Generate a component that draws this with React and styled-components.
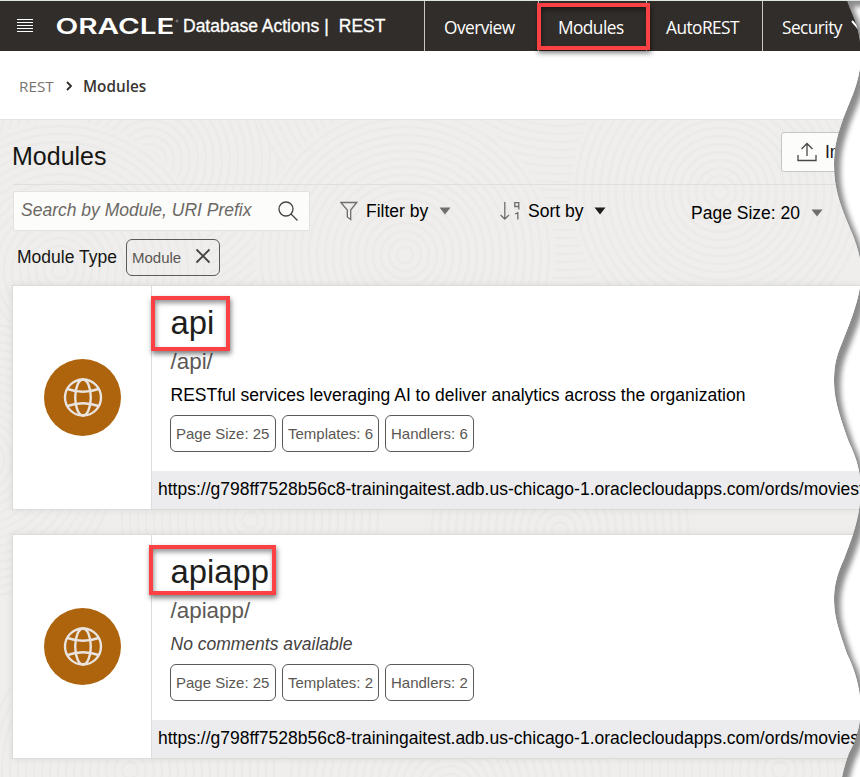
import React from "react";
import styled, { createGlobalStyle } from "styled-components";

const GlobalStyle = createGlobalStyle`
  * { box-sizing: border-box; }
  body { margin: 0; font-family: "Liberation Sans", Arial, sans-serif; color: #161513; }
`;

const Page = styled.div`
  position: relative;
  width: 860px;
  height: 777px;
  overflow: hidden;
  background: #fff;
  display: flex;
  flex-direction: column;
`;

const Header = styled.header`
  display: flex;
  flex: none;
  height: 51px;
  border-top: 1px solid #dde5dc;
  background: #312d2a;
  color: #fff;
`;

const Brand = styled.div`
  display: flex;
  align-items: center;
  flex: none;
  width: 424px;
  padding-left: 17px;
`;

const Logo = styled.svg`
  flex: none;
  margin-left: 22px;
`;

const Product = styled.div`
  display: flex;
  margin-left: 3px;
  font-size: 17.5px;
  line-height: 24px;
  -webkit-text-stroke: 0.3px #fff;
`;

const Bar = styled.span`
  margin: 0 10px 0 5px;
`;

const Nav = styled.nav`
  display: flex;
`;

const NavItem = styled.div`
  position: relative;
  flex: none;
  width: ${(p) => p.$width}px;
  padding: 2px 0 0 19px;
  border-left: 1px solid #c9c7c5;
  font-family: "Open Sans", "Noto Sans", sans-serif;
  font-size: 17.3px;
  letter-spacing: -0.55px;
  line-height: 49px;
  white-space: nowrap;
`;

const Highlight = styled.div`
  position: absolute;
  z-index: 1;
  left: ${(p) => p.$x}px;
  top: ${(p) => p.$y}px;
  width: ${(p) => p.$w}px;
  height: ${(p) => p.$h}px;
  border: 4px solid #fb4143;
  box-shadow: 1px 3px 5px rgba(0, 0, 0, 0.5), inset 1px 3px 5px rgba(0, 0, 0, 0.42);
`;

const NavChevron = styled.svg`
  position: absolute;
  left: 87px;
  top: 18px;
`;

const Crumbs = styled.div`
  display: flex;
  align-items: center;
  flex: none;
  height: 69px;
  padding: 1px 0 0 19px;
  border-bottom: 1px solid #e4e4e3;
  font-family: "Open Sans", "Noto Sans", sans-serif;
  font-size: 15.3px;
  line-height: 24px;
`;

const CrumbLink = styled.span`
  width: 46px;
  color: #77736f;
`;

const CrumbCurrent = styled.span`
  margin-left: 10px;
  font-weight: 600;
  color: #3a3632;
`;

const Main = styled.main`
  position: relative;
  flex: 1;
  background: #efeeec;
`;

const Texture = styled.svg`
  position: absolute;
  left: 0;
  top: 0;
`;

const Content = styled.div`
  position: relative;
  padding-left: 13px;
`;

const TitleRow = styled.div`
  display: flex;
  height: 65px;
  border-bottom: 1px solid #dde0dd;
`;

const Title = styled.h1`
  flex: none;
  margin: 21px 0 0 -1px;
  width: 769px;
  font-size: 25px;
  font-weight: 400;
  line-height: 30px;
`;

const ImportButton = styled.div`
  display: flex;
  align-items: center;
  flex: none;
  gap: 8px;
  width: 110px;
  height: 40px;
  margin-top: 12px;
  padding-left: 15px;
  background: #fcfcfb;
  border: 1px solid #c4c5c7;
  border-radius: 3px;
  font-size: 17.5px;
`;

const Tools = styled.div`
  display: flex;
  align-items: flex-start;
  height: 47px;
  padding-top: 6px;
  font-size: 17.5px;
`;

const SearchBox = styled.div`
  display: flex;
  align-items: center;
  justify-content: space-between;
  flex: none;
  width: 297px;
  height: 40px;
  padding: 0 11px 1px 7px;
  background: #fcfcfb;
  border: 1px solid #e2e2e1;
  border-radius: 2px;
  color: #6b6864;
  font-style: italic;
  white-space: nowrap;
`;

const Tool = styled.div`
  display: flex;
  align-items: center;
  height: 24px;
  margin: ${(p) => p.$top}px 0 0 ${(p) => p.$left}px;
  color: #000;
  white-space: nowrap;
  line-height: 24px;
`;

const ToolLabel = styled.span`
  width: ${(p) => p.$width}px;
`;

const FilterRow = styled.div`
  display: flex;
  align-items: center;
  height: 38px;
  margin-top: 6px;
  padding-left: 4px;
`;

const FilterLabel = styled.span`
  width: 109px;
  font-size: 17.5px;
`;

const Chip = styled.span`
  display: flex;
  align-items: center;
  flex: none;
  width: ${(p) => p.$width}px;
  height: 37px;
  padding-left: 5px;
  border: 1px solid #5d5a56;
  border-radius: 6px;
  color: #5a5753;
  font-size: 15px;
  white-space: nowrap;

  svg { margin: -3px 0 0 14px; }
`;

const Cards = styled.div`
  display: flex;
  flex-direction: column;
  gap: 24px;
  margin-top: 9px;
`;

const Card = styled.article`
  display: flex;
  height: 225px;
  background: #fff;
  border: 1px solid #dcdcdb;
  border-right: 0;
  box-shadow: 0 0 8px rgba(0, 0, 0, 0.07);
  margin-left: -1px;
`;

const CardIcon = styled.div`
  display: flex;
  align-items: center;
  justify-content: center;
  flex: none;
  width: 139px;
  border-right: 1px solid #dcdcdb;
`;

const CardBody = styled.div`
  position: relative;
  display: flex;
  flex-direction: column;
  flex: 1;
  min-width: 0;
  padding-top: 17px;
`;

const Name = styled.h2`
  margin: 0 0 5px 18.5px;
  font-size: 32.8px;
  font-weight: 400;
  line-height: 40px;
  color: #201e1c;
`;

const Prefix = styled.div`
  margin: 0 0 7px 18.5px;
  font-size: 22.4px;
  line-height: 28px;
  color: #5c5955;
`;

const Comment = styled.div`
  margin: 0 0 8px 18.5px;
  font-size: 17.5px;
  line-height: 24px;
  color: ${(p) => (p.$empty ? "#45423f" : "#000")};
  font-style: ${(p) => (p.$empty ? "italic" : "normal")};
`;

const Stats = styled.div`
  display: flex;
  gap: 6px;
  margin-left: 18px;
`;

const Url = styled.div`
  height: 38px;
  margin-top: auto;
  padding-left: 6px;
  overflow: hidden;
  background: #ececee;
  color: #000;
  font-size: 17.5px;
  line-height: 37px;
  white-space: nowrap;
`;

const TornEdge = styled.svg`
  position: absolute;
  z-index: 2;
  left: 820px;
  top: 0;
`;

const Caret = ({ color = "#706e6c" }) => (
  <svg width="12" height="8" viewBox="0 0 12 8">
    <path d="M.5 .5h11L6 7.5z" fill={color} />
  </svg>
);

const Globe = () => (
  <svg width="77" height="77" viewBox="0 0 77 77">
    <circle cx="38.5" cy="38.5" r="38.5" fill="#ae630d" />
    <g fill="none" stroke="#eae4e1" strokeWidth="2.4">
      <circle cx="39" cy="38.500" r="18" />
      <ellipse cx="39" cy="38.500" rx="7.8" ry="18" />
      <path d="M23.500 30Q39 35.500 54.500 30M23.500 47Q39 41.500 54.500 47" />
    </g>
  </svg>
);

const swirls = [
  [150, 40, 260], [560, -130, 330], [60, 150, 150], [405, 135, 150],
  [720, 72, 150], [250, 400, 130], [560, 410, 130], [-20, 340, 140],
  [130, 650, 150], [450, 670, 160], [780, 650, 160],
];

const Backdrop = () => (
  <Texture width="860" height="657">
    {swirls.map(([x, y, r]) => (
      <g key={`${x}-${y}`} fill="none" stroke="#ebeae8" strokeWidth="2.4">
        <circle cx={x} cy={y} r={r} fill="#efeeec" stroke="none" />
        {Array.from({ length: Math.floor(r / 8) }, (_, i) => (
          <circle key={i} cx={x} cy={y} r={8 * (i + 1)} />
        ))}
      </g>
    ))}
  </Texture>
);

const tear =
  "M27 1C31 14 37 20 40 43L40 68C37 88 29 103 23 119C18 134 14 145 14 165C14 188 20 203 26 219C32 233 37 244 40 259L40 287C37 306 29 325 22 343C16 357 14 366 14 382C14 402 22 422 28 440C33 451 38 462 40 477L40 502C38 522 32 538 24 559C17 574 14 586 14 600C14 620 22 638 27 654C33 666 38 680 40 697L40 720C38 733 34 744 29 753Q25 763 22 777L100 777L100 1Z";

const modules = [
  {
    name: "api",
    prefix: "/api/",
    comment: "RESTful services leveraging AI to deliver analytics across the organization",
    templates: 6,
    handlers: 6,
    box: { $x: -1, $y: 10, $w: 79, $h: 55 },
  },
  {
    name: "apiapp",
    prefix: "/apiapp/",
    templates: 2,
    handlers: 2,
    box: { $x: -3, $y: 10, $w: 127, $h: 50 },
  },
];

export default function App() {
  return (
    <Page>
      <GlobalStyle />
      <Header>
        <Brand>
          <svg width="16" height="16" viewBox="0 0 16 16">
            <path d="M0 1.500h16M0 4.500h16M0 7.500h16M0 10.500h16M0 13.500h16" stroke="#fff" strokeWidth="1.1" />
          </svg>
          <Logo width="125" height="24" viewBox="0 0 125 24">
            <text x="0.500" y="20" fill="#fff" fontFamily="Inter, Liberation Sans, sans-serif" fontWeight="600" fontSize="21.500" textLength="119" lengthAdjust="spacingAndGlyphs">ORACLE</text>
            <circle cx="122" cy="7" r="1" fill="none" stroke="#ccc" strokeWidth=".5" />
          </Logo>
          <Product>Database Actions<Bar>|</Bar>REST</Product>
        </Brand>
        <Nav>
          <NavItem $width={114}>Overview</NavItem>
          <NavItem $width={108}>
            Modules
            <Highlight $x={-2} $y={2} $w={113} $h={47} />
          </NavItem>
          <NavItem $width={116}>AutoREST</NavItem>
          <NavItem $width={120}>
            Security
            <NavChevron width="16" height="12" viewBox="0 0 16 12">
              <path d="M2 2l6 7 6-7" fill="none" stroke="#fff" strokeWidth="2" />
            </NavChevron>
          </NavItem>
        </Nav>
      </Header>
      <Crumbs>
        <CrumbLink>REST</CrumbLink>
        <svg width="8" height="10" viewBox="0 0 8 10">
          <path d="M2 1l4 4-4 4" fill="none" stroke="#312d2a" strokeWidth="1.8" />
        </svg>
        <CrumbCurrent>Modules</CrumbCurrent>
      </Crumbs>
      <Main>
        <Backdrop />
        <Content>
          <TitleRow>
            <Title>Modules</Title>
            <ImportButton>
              <svg width="20" height="20" viewBox="0 0 20 20" fill="none" stroke="#4a4744" strokeWidth="1.3">
                <path d="M1 13v5.500h18V13M10 14V1.500M4.500 7L10 1.500 15.500 7" />
              </svg>
              Import
            </ImportButton>
          </TitleRow>
          <Tools>
            <SearchBox>
              Search by Module, URI Prefix
              <svg width="20" height="20" viewBox="0 0 20 20" fill="none" stroke="#45423f" strokeWidth="1.3">
                <circle cx="8" cy="8" r="7" />
                <path d="M13 13l6.500 6.500" />
              </svg>
            </SearchBox>
            <Tool $left={30} $top={8}>
              <svg width="26" height="20" viewBox="0 0 26 20" fill="none" stroke="#706e6c" strokeWidth="1.3">
                <path d="M.8 1.500h16L10.700 9v9.500L7.300 16V9z" />
              </svg>
              <ToolLabel $width={73}>Filter by</ToolLabel>
              <Caret />
            </Tool>
            <Tool $left={49} $top={8}>
              <svg width="28" height="20" viewBox="0 0 28 20" fill="none" stroke="#706e6c" strokeWidth="1.3">
                <path d="M4.800 1v17M.6 14l4.200 4 4.200-4M18.800 8.500V1.700h-4v3.800h4M15 13l2.800-1.300V18.500" />
              </svg>
              <ToolLabel $width={66}>Sort by</ToolLabel>
              <Caret color="#201e1c" />
            </Tool>
            <Tool $left={85} $top={10}>
              <ToolLabel $width={120}>Page Size: 20</ToolLabel>
              <Caret />
            </Tool>
          </Tools>
          <FilterRow>
            <FilterLabel>Module Type</FilterLabel>
            <Chip $width={94}>
              Module
              <svg width="16" height="16" viewBox="0 0 16 16">
                <path d="M1.500 1.500l13 13M14.500 1.500l-13 13" stroke="#45423f" strokeWidth="1.8" />
              </svg>
            </Chip>
          </FilterRow>
          <Cards>
            {modules.map((m) => (
              <Card key={m.name}>
                <CardIcon><Globe /></CardIcon>
                <CardBody>
                  <Name>{m.name}</Name>
                  <Prefix>{m.prefix}</Prefix>
                  <Comment $empty={!m.comment}>{m.comment || "No comments available"}</Comment>
                  <Stats>
                    <Chip $width={106}>Page Size: 25</Chip>
                    <Chip $width={97}>Templates: {m.templates}</Chip>
                    <Chip $width={89}>Handlers: {m.handlers}</Chip>
                  </Stats>
                  <Url>https://g798ff7528b56c8-trainingaitest.adb.us-chicago-1.oraclecloudapps.com/ords/moviest</Url>
                  <Highlight {...m.box} />
                </CardBody>
              </Card>
            ))}
          </Cards>
        </Content>
      </Main>
      <TornEdge width="40" height="777" viewBox="0 0 40 777">
        <defs>
          <clipPath id="tear"><path d={tear} /></clipPath>
          <filter id="soften" filterUnits="userSpaceOnUse" x="-20" y="-20" width="140" height="830">
            <feGaussianBlur stdDeviation="2.500" />
          </filter>
        </defs>
        <g clipPath="url(#tear)">
          <path d={tear} fill="#8c8c8c" />
          <path d={tear} transform="translate(7 6)" fill="#fff" stroke="#fff" filter="url(#soften)" />
        </g>
      </TornEdge>
    </Page>
  );
}
